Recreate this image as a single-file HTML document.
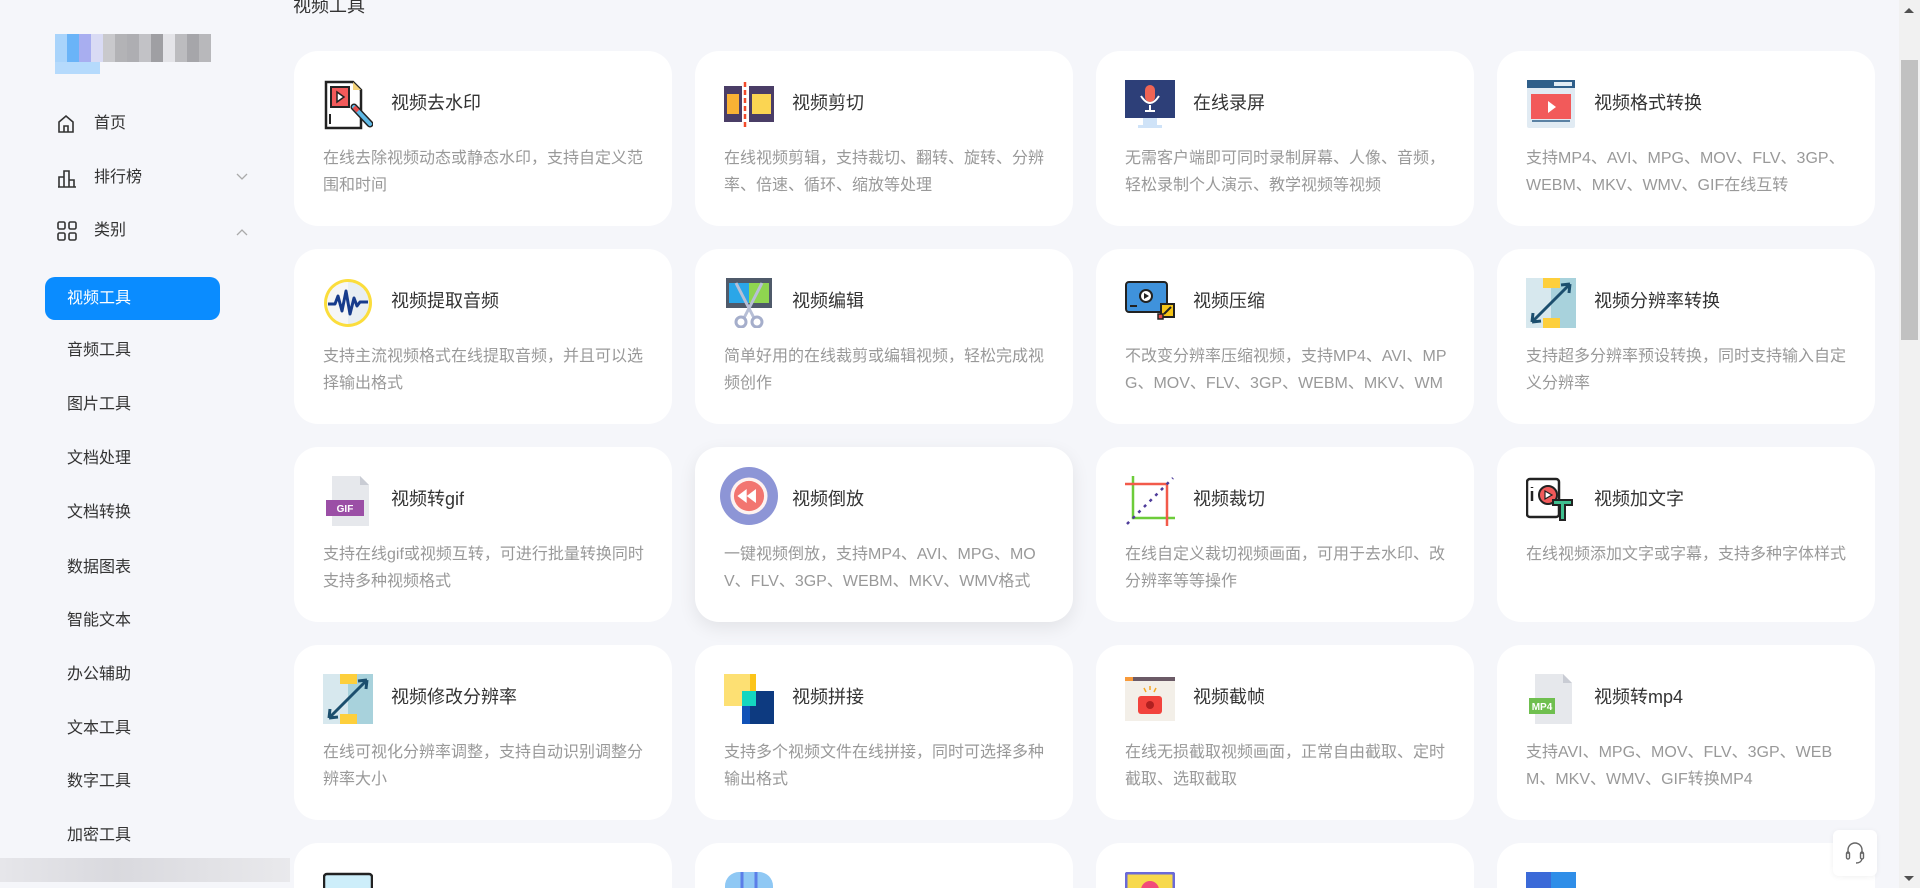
<!DOCTYPE html>
<html><head><meta charset="utf-8">
<style>
*{margin:0;padding:0;box-sizing:border-box}
html,body{width:1920px;height:888px;overflow:hidden;background:#f5f6fa;font-family:"Liberation Sans","Noto Sans CJK SC",sans-serif}
#wrap{position:relative;width:1920px;height:888px;overflow:hidden}
.side{position:absolute;left:0;top:0;width:270px;height:888px}
.mi{position:absolute;left:57px;font-size:16px;color:#333;height:24px;line-height:24px}
.mi svg{position:absolute;left:0;top:2px}
.mi span{position:absolute;left:37px;white-space:nowrap}
.sub{position:absolute;left:67px;font-size:16px;color:#333;line-height:22px}
.act{position:absolute;left:45px;top:277px;width:175px;height:43px;background:#0a8cff;border-radius:10px;color:#fff;font-size:16px;line-height:43px;padding-left:22px}
.card{position:absolute;width:378px;height:175px;background:#fff;border-radius:24px;overflow:hidden}
.card.last{height:45px;border-radius:24px 24px 0 0}
.card .ic{position:absolute;left:29px;top:29px;width:50px;height:50px}
.card .t{position:absolute;left:97px;top:40px;font-size:18px;color:#333;line-height:24px;white-space:nowrap}
.card .d{position:absolute;left:29px;top:94px;width:332px;font-size:16px;color:#999;line-height:27px;word-break:break-all}
.title{position:absolute;left:293px;top:-8px;font-size:18px;color:#333}
.sb{position:absolute;left:1899px;top:0;width:21px;height:888px;background:#f1f1f1}
.thumb{position:absolute;left:1901px;top:60px;width:17px;height:280px;background:#c1c1c1}
</style></head><body><div id="wrap">
<div class="title">视频工具</div>
<div class="side">
 <div style="position:absolute;left:55px;top:34px;width:160px;height:28px;display:flex">
  <div style="width:12px;background:#a9d4fb"></div><div style="width:12px;background:#6ab4f8"></div><div style="width:12px;background:#a8aef0"></div><div style="width:12px;background:#d9dbf4"></div>
  <div style="width:12px;background:#c9c9cc"></div><div style="width:12px;background:#b3b3b6"></div><div style="width:12px;background:#aeaeb2"></div><div style="width:12px;background:#c2c2c6"></div><div style="width:12px;background:#9f9fa3"></div><div style="width:12px;background:#e4e4e8"></div><div style="width:12px;background:#bcbcbf"></div><div style="width:12px;background:#a6a6aa"></div><div style="width:12px;background:#b8b8bb"></div>
 </div>
 <div style="position:absolute;left:55px;top:62px;width:45px;height:12px;background:#b5dafc"></div>
 <div class="mi" style="top:112px"><svg width="18" height="20" viewBox="0 0 18 20" fill="none" stroke="#333" stroke-width="1.6"><path d="M2 8 L9 2 L16 8 V18 H2 Z"/><path d="M7 18 V12 H11 V18"/></svg><span>首页</span></div>
 <div class="mi" style="top:166px"><svg width="20" height="20" viewBox="0 0 20 20" fill="none" stroke="#333" stroke-width="1.6"><path d="M1 19 H19 M2 19 V9 H7 V19 M7 19 V3 H12 V19 M12 19 V12 H17 V19"/></svg><span>排行榜</span></div>
 <svg style="position:absolute;left:236px;top:173px" width="12" height="8" viewBox="0 0 12 8" fill="none" stroke="#aaa" stroke-width="1.3"><path d="M1 1 L6 6 L11 1"/></svg>
 <div class="mi" style="top:219px"><svg width="20" height="20" viewBox="0 0 20 20" fill="none" stroke="#333" stroke-width="1.6"><rect x="1" y="1" width="7" height="7" rx="1.5"/><rect x="12" y="1" width="7" height="7" rx="1.5"/><rect x="1" y="12" width="7" height="7" rx="1.5"/><rect x="12" y="12" width="7" height="7" rx="1.5"/></svg><span>类别</span></div>
 <svg style="position:absolute;left:236px;top:228px" width="12" height="8" viewBox="0 0 12 8" fill="none" stroke="#aaa" stroke-width="1.3"><path d="M1 7 L6 2 L11 7"/></svg>
 <div class="act">视频工具</div>
 <div class="sub" style="top:340px">音频工具</div>
 <div class="sub" style="top:394px">图片工具</div>
 <div class="sub" style="top:448px">文档处理</div>
 <div class="sub" style="top:502px">文档转换</div>
 <div class="sub" style="top:557px">数据图表</div>
 <div class="sub" style="top:610px">智能文本</div>
 <div class="sub" style="top:664px">办公辅助</div>
 <div class="sub" style="top:718px">文本工具</div>
 <div class="sub" style="top:771px">数字工具</div>
 <div class="sub" style="top:825px">加密工具</div>
 <div style="position:absolute;left:0;top:858px;width:290px;height:24px;background:linear-gradient(90deg,#e6e6ea,#d9d9de 40%,#e9e9ec)"></div>
</div>

<!-- row 1 -->
<div class="card" style="left:294px;top:51px"><svg class="ic" viewBox="0 0 50 50"><path d="M3 2 H30 L38 10 V48 H3 Z" fill="#fff" stroke="#222" stroke-width="2.5"/><path d="M30 2 V10 H38" fill="#f4d37a"/><rect x="8" y="7" width="18" height="20" fill="#f25a5a" stroke="#222" stroke-width="2"/><path d="M14 12 L21 17 L14 22 Z" fill="#fff" stroke="#222" stroke-width="1.5"/><path d="M31 27 L47 44" stroke="#222" stroke-width="7" stroke-linecap="round"/><path d="M31 27 L47 44" stroke="#5fb9e6" stroke-width="4" stroke-linecap="round"/><path d="M31 27 L35 31" stroke="#e84b4b" stroke-width="4"/><path d="M7 34 V44" stroke="#222" stroke-width="2"/></svg><div class="t">视频去水印</div><div class="d">在线去除视频动态或静态水印，支持自定义范围和时间</div></div>
<div class="card" style="left:695px;top:51px"><svg class="ic" viewBox="0 0 50 50"><rect x="0" y="6" width="18" height="36" fill="#4a3d66"/><rect x="25" y="6" width="25" height="36" fill="#4a3d66"/><rect x="3" y="14" width="12" height="20" fill="#f9b234"/><rect x="28" y="14" width="19" height="20" fill="#fbd552"/><path d="M21 2 V48" stroke="#f24a2a" stroke-width="2.5" stroke-dasharray="5 3"/></svg><div class="t">视频剪切</div><div class="d">在线视频剪辑，支持裁切、翻转、旋转、分辨率、倍速、循环、缩放等处理</div></div>
<div class="card" style="left:1096px;top:51px"><svg class="ic" viewBox="0 0 50 50"><rect x="0" y="0" width="50" height="38" fill="#2d3f78"/><rect x="18" y="38" width="14" height="8" fill="#cfe3f8"/><rect x="13" y="45" width="24" height="3" fill="#cfe3f8"/><rect x="20" y="5" width="10" height="17" rx="5" fill="#f06454"/><path d="M16 16 Q25 30 34 16 M25 25 V31 M20 31 H30" stroke="#fff" stroke-width="2" fill="none"/></svg><div class="t">在线录屏</div><div class="d">无需客户端即可同时录制屏幕、人像、音频，轻松录制个人演示、教学视频等视频</div></div>
<div class="card" style="left:1497px;top:51px"><svg class="ic" viewBox="0 0 50 50"><rect x="1" y="0" width="48" height="48" rx="2" fill="#e1ebf3"/><rect x="1" y="0" width="48" height="8" fill="#2f5f8a"/><rect x="28" y="2" width="18" height="4" fill="#e1ebf3"/><rect x="5" y="14" width="40" height="25" fill="#f25a5a"/><path d="M22 21 L30 27 L22 33 Z" fill="#fff"/><path d="M6 41 H44" stroke="#2f5f8a" stroke-width="1.5"/></svg><div class="t">视频格式转换</div><div class="d">支持MP4、AVI、MPG、MOV、FLV、3GP、WEBM、MKV、WMV、GIF在线互转</div></div>
<!-- row 2 -->
<div class="card" style="left:294px;top:249px"><svg class="ic" viewBox="0 0 50 50"><circle cx="25" cy="25" r="24" fill="#fbdd3c"/><circle cx="25" cy="25" r="21" fill="#e8eef3"/><path d="M25 4 A21 21 0 0 0 25 46 Z" fill="#f6f6f6"/><path d="M5 26 H12 L15 18 L19 33 L23 13 L27 36 L31 20 L34 28 L37 24 H45" stroke="#173b8c" stroke-width="3" fill="none" stroke-linejoin="round"/></svg><div class="t">视频提取音频</div><div class="d">支持主流视频格式在线提取音频，并且可以选择输出格式</div></div>
<div class="card" style="left:695px;top:249px"><svg class="ic" viewBox="0 0 50 50"><rect x="2" y="0" width="46" height="30" fill="#4f5a6a"/><rect x="5" y="5" width="20" height="20" fill="#2aa6e8"/><rect x="25" y="5" width="20" height="20" fill="#8fd550"/><path d="M12 5 L30 40 M38 5 L20 40" stroke="#b7bfd6" stroke-width="3"/><circle cx="17" cy="44" r="5" fill="none" stroke="#a5aecb" stroke-width="3"/><circle cx="33" cy="44" r="5" fill="none" stroke="#a5aecb" stroke-width="3"/></svg><div class="t">视频编辑</div><div class="d">简单好用的在线裁剪或编辑视频，轻松完成视频创作</div></div>
<div class="card" style="left:1096px;top:249px"><svg class="ic" viewBox="0 0 50 50"><rect x="1" y="4" width="41" height="30" rx="3" fill="#3f92dc" stroke="#222" stroke-width="2"/><circle cx="21" cy="18" r="6" fill="#fff" stroke="#222" stroke-width="2"/><path d="M19 15 L24 18 L19 21 Z" fill="#222"/><path d="M5 28 H12" stroke="#222" stroke-width="2"/><rect x="36" y="26" width="13" height="13" fill="#f5c518" stroke="#222" stroke-width="2"/><rect x="33" y="36" width="5" height="5" fill="#e84b4b" stroke="#222" stroke-width="1.5"/><path d="M39 36 L46 29" stroke="#222" stroke-width="2"/></svg><div class="t">视频压缩</div><div class="d">不改变分辨率压缩视频，支持MP4、AVI、MPG、MOV、FLV、3GP、WEBM、MKV、WM</div></div>
<div class="card" style="left:1497px;top:249px"><svg class="ic" viewBox="0 0 50 50"><rect width="50" height="50" fill="#d7e8ee"/><rect x="25" width="25" height="50" fill="#a8d2dc"/><rect x="17" width="17" height="10" fill="#fdcf3c"/><rect x="17" y="40" width="17" height="10" fill="#fdcf3c"/><path d="M6 44 L44 6 M6 44 L7 35 M6 44 L15 43 M44 6 L35 7 M44 6 L43 15" stroke="#1c4f6e" stroke-width="3" fill="none"/></svg><div class="t">视频分辨率转换</div><div class="d">支持超多分辨率预设转换，同时支持输入自定义分辨率</div></div>
<!-- row 3 -->
<div class="card" style="left:294px;top:447px"><svg class="ic" viewBox="0 0 50 50"><path d="M9 0 H37 L46 9 V50 H9 Z" fill="#e6e8ec"/><path d="M37 0 V9 H46 Z" fill="#c9ccd4"/><rect x="3" y="24" width="38" height="16" fill="#9b4fa6"/><text x="22" y="36" font-size="10" font-weight="bold" fill="#fff" text-anchor="middle" font-family="Liberation Sans">GIF</text></svg><div class="t">视频转gif</div><div class="d">支持在线gif或视频互转，可进行批量转换同时支持多种视频格式</div></div>
<div class="card" style="left:695px;top:447px;box-shadow:0 6px 18px rgba(0,0,0,0.08);overflow:visible"><svg class="ic" viewBox="0 0 50 50" style="left:25px;top:20px;width:58px;height:58px"><circle cx="25" cy="25" r="25" fill="#8d95d6"/><circle cx="25" cy="25" r="16" fill="#fdf2f0"/><circle cx="25" cy="25" r="13" fill="#f27570"/><path d="M15 25 L23 19 V31 Z M23 25 L31 19 V31 Z" fill="#fff"/></svg><div class="t">视频倒放</div><div class="d">一键视频倒放，支持MP4、AVI、MPG、MOV、FLV、3GP、WEBM、MKV、WMV格式</div></div>
<div class="card" style="left:1096px;top:447px"><svg class="ic" viewBox="0 0 50 50"><path d="M8 0 V42 H50" stroke="#6dcc3a" stroke-width="2.5" fill="none"/><path d="M0 8 H42 V50" stroke="#f25a4a" stroke-width="2.5" fill="none"/><path d="M2 48 L48 2" stroke="#4e3c9a" stroke-width="2.5" stroke-dasharray="3 5"/></svg><div class="t">视频裁切</div><div class="d">在线自定义裁切视频画面，可用于去水印、改分辨率等等操作</div></div>
<div class="card" style="left:1497px;top:447px"><svg class="ic" viewBox="0 0 50 50"><rect x="1" y="3" width="32" height="38" rx="3" fill="#fff" stroke="#222" stroke-width="2.5"/><circle cx="22" cy="19" r="9" fill="#f25a5a" stroke="#222" stroke-width="2"/><path d="M19 15 L26 19 L19 23 Z" fill="#fff" stroke="#222" stroke-width="1.2"/><path d="M6 15 V25 M6 11 V12" stroke="#222" stroke-width="2.5"/><path d="M27 24 H46 V29 H39 V44 H34 V29 H27 Z" fill="#3fbf8f" stroke="#222" stroke-width="2"/></svg><div class="t">视频加文字</div><div class="d">在线视频添加文字或字幕，支持多种字体样式</div></div>
<!-- row 4 -->
<div class="card" style="left:294px;top:645px"><svg class="ic" viewBox="0 0 50 50"><rect width="50" height="50" fill="#d7e8ee"/><rect x="25" width="25" height="50" fill="#a8d2dc"/><rect x="17" width="17" height="10" fill="#fdcf3c"/><rect x="17" y="40" width="17" height="10" fill="#fdcf3c"/><path d="M6 44 L44 6 M6 44 L7 35 M6 44 L15 43 M44 6 L35 7 M44 6 L43 15" stroke="#1c4f6e" stroke-width="3" fill="none"/></svg><div class="t">视频修改分辨率</div><div class="d">在线可视化分辨率调整，支持自动识别调整分辨率大小</div></div>
<div class="card" style="left:695px;top:645px"><svg class="ic" viewBox="0 0 50 50"><rect x="0" y="0" width="32" height="32" fill="#fde073"/><rect x="26" y="0" width="6" height="18" fill="#fcc419"/><rect x="18" y="17" width="32" height="33" fill="#0d3a80"/><rect x="18" y="17" width="14" height="15" fill="#14d6c0"/><rect x="18" y="32" width="8" height="18" fill="#1052b8"/></svg><div class="t">视频拼接</div><div class="d">支持多个视频文件在线拼接，同时可选择多种输出格式</div></div>
<div class="card" style="left:1096px;top:645px"><svg class="ic" viewBox="0 0 50 50"><rect x="0" y="3" width="50" height="44" fill="#f3efe8"/><rect x="0" y="3" width="50" height="4" fill="#6b5a66"/><rect x="0" y="3" width="8" height="4" fill="#f89a3a"/><rect x="13" y="22" width="24" height="18" rx="3" fill="#f2433d"/><circle cx="25" cy="31" r="4" fill="#b02020"/><path d="M25 12 V16 M19 14 L21 18 M31 14 L29 18" stroke="#f5a623" stroke-width="1.5"/></svg><div class="t">视频截帧</div><div class="d">在线无损截取视频画面，正常自由截取、定时截取、选取截取</div></div>
<div class="card" style="left:1497px;top:645px"><svg class="ic" viewBox="0 0 50 50"><path d="M9 0 H37 L46 9 V50 H9 Z" fill="#e6e8ec"/><path d="M37 0 V9 H46 Z" fill="#c9ccd4"/><rect x="3" y="24" width="26" height="16" fill="#6fbf4f"/><text x="16" y="36" font-size="10" font-weight="bold" fill="#fff" text-anchor="middle" font-family="Liberation Sans">MP4</text></svg><div class="t">视频转mp4</div><div class="d">支持AVI、MPG、MOV、FLV、3GP、WEBM、MKV、WMV、GIF转换MP4</div></div>
<!-- row 5 -->
<div class="card last" style="left:294px;top:843px"><svg class="ic" viewBox="0 0 50 50"><rect x="1" y="2" width="48" height="40" rx="3" fill="#cdeefa" stroke="#222" stroke-width="2.5"/></svg></div>
<div class="card last" style="left:695px;top:843px"><svg class="ic" viewBox="0 0 50 50"><rect x="1" y="0" width="48" height="40" rx="14" fill="#8fc8f4"/><path d="M18 0 V20 M32 0 V20" stroke="#5b7ee8" stroke-width="3"/></svg></div>
<div class="card last" style="left:1096px;top:843px"><svg class="ic" viewBox="0 0 50 50"><rect x="1" y="1" width="48" height="40" rx="2" fill="#f7d94c" stroke="#6a6ad8" stroke-width="3"/><circle cx="25" cy="18" r="9" fill="#f24a7a"/></svg></div>
<div class="card last" style="left:1497px;top:843px"><svg class="ic" viewBox="0 0 50 50"><rect x="0" y="0" width="50" height="40" fill="#3b6ad8"/><rect x="25" y="0" width="25" height="40" fill="#2f8ee8"/></svg></div>

<div style="position:absolute;left:1833px;top:830px;width:44px;height:46px;background:#fff;border-radius:6px;box-shadow:0 1px 6px rgba(0,0,0,0.06)"><svg style="position:absolute;left:12px;top:11px" width="20" height="24" viewBox="0 0 20 24" fill="none" stroke="#666" stroke-width="1.4"><path d="M3 13 V9 A7 7 0 0 1 17 9 V13"/><rect x="1.5" y="11" width="3" height="7" rx="1.5"/><rect x="15.5" y="11" width="3" height="7" rx="1.5"/><path d="M17 18 Q16 22 11 22"/></svg></div>
<div class="sb"></div><div class="thumb"></div>
<div style="position:absolute;left:1904px;top:8px;width:0;height:0;border-left:5px solid transparent;border-right:5px solid transparent;border-bottom:5px solid #505050"></div>
<div style="position:absolute;left:1904px;top:876px;width:0;height:0;border-left:5px solid transparent;border-right:5px solid transparent;border-top:5px solid #505050"></div>
</div></body></html>
